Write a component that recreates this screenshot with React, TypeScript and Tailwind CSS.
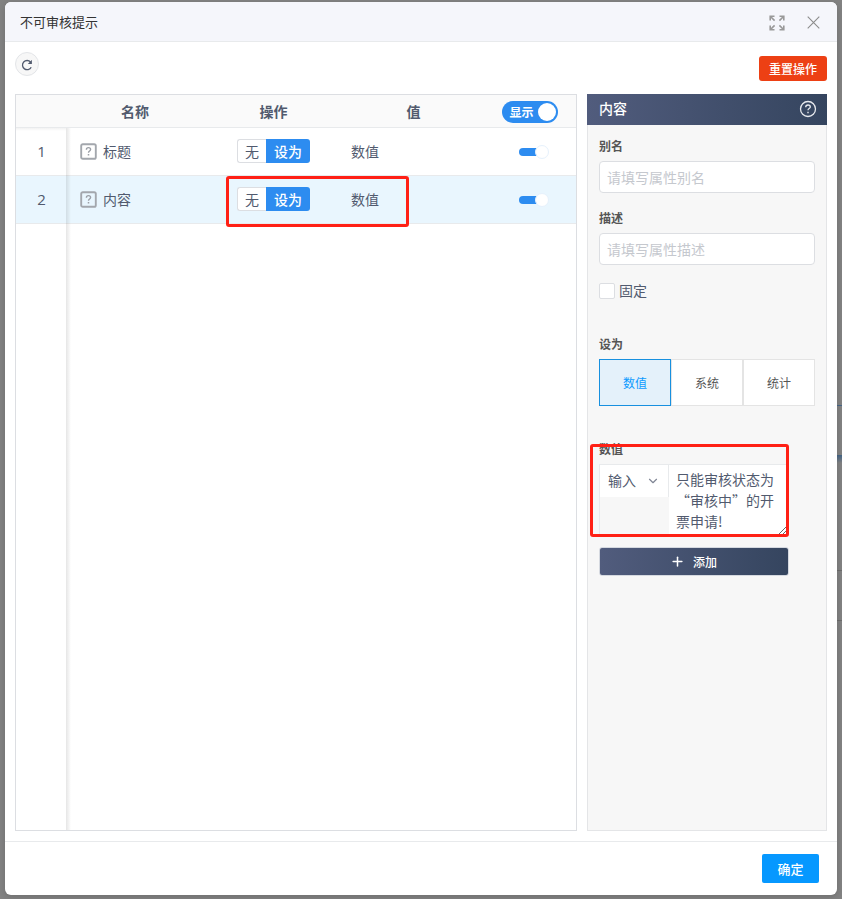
import React from 'react';
import { ChevronDown, Plus } from 'lucide-react';

const rows = [
  { id: 1, name: '标题', active: false },
  { id: 2, name: '内容', active: true },
];

const tabs = ['数值', '系统', '统计'];

const HelpSquare = () => (
  <svg width="17" height="17" viewBox="0 0 17 17" fill="none" className="shrink-0">
    <rect x="1.2" y="1.2" width="14.6" height="14.6" rx="1.6" stroke="#a3a7ad" strokeWidth="1.9" />
    <path d="M6.4 6.7c0-1.3.9-2.1 2.1-2.1s2.1.8 2.1 1.9c0 1.5-2.1 1.6-2.1 3.2" stroke="#9b9fa6" strokeWidth="1.4" />
    <path d="M8.5 11v1.6" stroke="#9b9fa6" strokeWidth="1.5" />
  </svg>
);

const HelpCircle = () => (
  <svg width="18" height="18" viewBox="0 0 18 18" fill="none" className="-mt-px">
    <circle cx="9" cy="9" r="7.5" stroke="#e8eaee" strokeWidth="1.3" />
    <path d="M6.7 7.3c0-1.4 1-2.3 2.3-2.3s2.3.8 2.3 2c0 1.6-2.3 1.6-2.3 3.3" stroke="#e8eaee" strokeWidth="1.3" />
    <path d="M9 11.7v1.5" stroke="#e8eaee" strokeWidth="1.4" />
  </svg>
);

const FullscreenIcon = () => (
  <svg width="16" height="16" viewBox="0 0 16 16" fill="none" stroke="#999" strokeWidth="1.6" className="mt-[2px]">
    <path d="M1.2 5.5V1.2h4.3M1.2 1.2l4.4 4.4" />
    <path d="M10.5 1.2h4.3v4.3M14.8 1.2l-4.4 4.4" />
    <path d="M1.2 10.5v4.3h4.3M1.2 14.8l4.4-4.4" />
    <path d="M14.8 10.5v4.3h-4.3M14.8 14.8l-4.4-4.4" />
  </svg>
);

const CloseIcon = () => (
  <svg width="13" height="13" viewBox="0 0 13 13" stroke="#8c8c8c" strokeWidth="1.1" className="mt-[2px]">
    <path d="M.7.7l11.6 11.6M12.3.7L.7 12.3" />
  </svg>
);

const ReloadIcon = () => (
  <svg width="12" height="12" viewBox="0 0 12 12" fill="none" stroke="#515a6e" strokeWidth="1.3" className="mt-px">
    <path d="M10.2 8.2A4.6 4.6 0 1 1 9.6 3.1" />
    <path d="M10.9.8v4.1H6.8z" fill="#515a6e" stroke="none" />
  </svg>
);

const SmallSwitch = () => (
  <div className="relative h-[14px] w-[30px]">
    <div className="absolute top-[3px] left-0 h-2 w-6 rounded-full bg-[#2d8cf0]" />
    <div className="absolute top-0 right-0 h-[14px] w-[14px] rounded-full border border-[#e6f1fc] bg-white" />
  </div>
);

const Table = () => (
  <div className="relative flex w-[562px] flex-col border border-[#dcdee2] bg-white">
    <div className="grid h-[33px] shrink-0 grid-cols-[51px_136px_141px_139px_93px] items-center border-b border-[#e8eaec] bg-[#fafafa] text-center text-sm font-bold text-[#515a6e]">
      <span />
      <span>名称</span>
      <span>操作</span>
      <span>值</span>
      <div className="flex justify-center pt-px">
        <div className="flex h-[22px] w-14 items-center justify-between rounded-full bg-[#2d8cf0] pr-[2px] pl-2 text-xs text-white">
          <span>显示</span>
          <span className="h-[18px] w-[18px] rounded-full bg-white" />
        </div>
      </div>
    </div>
    {rows.map(row => (
      <div
        key={row.id}
        className={`grid h-12 shrink-0 grid-cols-[51px_136px_141px_139px_93px] items-center border-b border-[#e8eaec] text-sm text-[#515a6e] ${row.active ? 'bg-[#e9f6fe]' : 'bg-white'}`}
      >
        <span className="text-center font-['Open_Sans',sans-serif] text-[15px]">{row.id}</span>
        <div className="flex items-center gap-[6px] pl-[13px]">
          <HelpSquare />
          <span className="-mt-[2px]">{row.name}</span>
        </div>
        <div className="flex pb-[2px] pl-[34px] leading-5">
          <span className="flex h-6 w-[29px] items-center justify-center rounded-l-[3px] border border-r-0 border-[#dcdee2] bg-white">无</span>
          <span className="flex h-6 w-11 items-center justify-center rounded-r-[3px] bg-[#2d8cf0] font-medium text-white">设为</span>
        </div>
        <span className="pb-[2px] pl-[7px]">数值</span>
        <div className="flex justify-center pl-[9px]">
          <SmallSwitch />
        </div>
      </div>
    ))}
    {/* fixed index column edge */}
    <div className="absolute top-[33px] bottom-0 left-[50px] w-[5px] bg-linear-to-r from-black/10 to-transparent" />
    <div className="absolute top-[33px] left-0 h-[3px] w-[50px] bg-linear-to-b from-black/5 to-transparent" />
    <div className="absolute top-[81px] left-[210px] h-[51px] w-[183px] rounded-[3px] border-[3px] border-[#ff2015]" />
  </div>
);

const Label = ({ children }: { children: React.ReactNode }) => (
  <div className="h-[18px] text-xs leading-[18px] font-bold text-[#555]">{children}</div>
);

const Panel = () => (
  <div className="flex w-60 flex-col bg-[#f7f7f7]">
    <div className="flex h-[31px] shrink-0 items-center justify-between bg-linear-to-r from-[#515c7d] to-[#35455f] pr-[10px] pl-3 text-sm font-medium text-white">
      <span className="-mt-[3px]">内容</span>
      <HelpCircle />
    </div>
    <div className="flex-1 border border-t-0 border-[#e4e5e7] px-[11px] pt-3">
      <Label>别名</Label>
      <div className="mt-[6px] flex h-8 items-center rounded border border-[#dcdee2] bg-white px-[7px] text-sm text-[#c5c8ce]">请填写属性别名</div>
      <div className="mt-4">
        <Label>描述</Label>
      </div>
      <div className="mt-[6px] flex h-8 items-center rounded border border-[#dcdee2] bg-white px-[7px] text-sm text-[#c5c8ce]">请填写属性描述</div>
      <div className="mt-4 flex h-5 items-center gap-1 text-sm text-[#515a6e]">
        <span className="h-4 w-4 rounded-[2px] border border-[#dcdee2] bg-white" />
        <span className="-mt-[2px]">固定</span>
      </div>
      <div className="mt-[34px]">
        <Label>设为</Label>
      </div>
      <div className="mt-[6px] grid h-[47px] grid-cols-3 text-xs text-[#555]">
        {tabs.map((tab, i) => (
          <span
            key={tab}
            className={`flex items-center justify-center border ${i === 0 ? 'border-[#1890df] bg-[#e4f1fa] text-[#0d9bff]' : 'border-[#e4e4e4] bg-white'}`}
          >
            {tab}
          </span>
        ))}
      </div>
      <div className="relative mt-[34px]">
        <Label>数值</Label>
        <div className="mt-[6px] flex h-[71px] w-[189px] border-t border-l border-[#e8eaec]">
          <div className="flex h-8 w-[69px] items-center justify-between border-r border-[#e8eaec] bg-white pr-2 pb-[3px] pl-2 text-sm text-[#515a6e]">
            <span>输入</span>
            <ChevronDown size={14} strokeWidth={2} className="mt-[2px] text-[#808695]" />
          </div>
          <div className="relative flex-1 bg-white pt-1 pl-[7px] text-sm leading-[21px] whitespace-nowrap text-[#515a6e]">
            <div>只能审核状态为</div>
            <div>“审核中”的开</div>
            <div>票申请!</div>
            <svg width="8" height="8" viewBox="0 0 8 8" stroke="#666" className="absolute right-[2px] bottom-0">
              <path d="M0 8L8 0M4 8l4-4" />
            </svg>
          </div>
        </div>
        <div className="absolute top-1 -left-[9px] h-[93px] w-[199px] rounded-[3px] border-[3px] border-[#ff2015]" />
      </div>
      <button className="mt-3 flex h-[29px] w-[190px] items-center justify-center gap-2 rounded-[3px] border border-[#d5d9e0] bg-linear-to-r from-[#515c7d] to-[#35455f] pr-px text-xs font-medium text-white">
        <Plus size={15} strokeWidth={2.4} />
        添加
      </button>
    </div>
  </div>
);

const App: React.FC = () => {
  return (
    <div className="relative h-[899px] w-[842px] overflow-hidden bg-[#828282] pt-[2px] pl-[5px] font-['Noto_Sans_CJK_SC',sans-serif]">
      {/* dimmed page showing past the right edge */}
      <div className="absolute top-[405px] right-0 h-px w-[5px] bg-[#476788]" />
      <div className="absolute top-[455px] right-0 h-2 w-[5px] bg-linear-to-b from-[#426384] to-[#828282]" />
      <div className="absolute top-[570px] right-0 h-px w-[5px] bg-[#6d6d6d]" />
      <div className="absolute top-[620px] right-0 h-px w-[5px] bg-[#6d6d6d]" />

      <div className="relative flex h-[893px] w-[832px] flex-col overflow-hidden rounded-md bg-white shadow-[0_2px_6px_rgba(0,0,0,0.15)]">
        <header className="flex h-10 shrink-0 items-center justify-between border-b border-[#e8eaec] bg-[#f5f6fb] pr-[17px] pl-[15px] text-[13px] text-[#333]">
          <span>不可审核提示</span>
          <div className="flex items-center gap-[22px]">
            <FullscreenIcon />
            <CloseIcon />
          </div>
        </header>

        <div className="flex h-[52px] shrink-0 items-start justify-between pr-[10px] pl-[10px]">
          <button className="mt-[10px] flex h-6 w-6 items-center justify-center rounded-full border border-[#e3e5e8] bg-[#f7f7f7]">
            <ReloadIcon />
          </button>
          <button className="mt-[14px] h-[25px] w-[68px] rounded-[3px] bg-[#ed4014] text-xs font-medium text-white">重置操作</button>
        </div>

        <div className="flex h-[737px] shrink-0 gap-[10px] px-[10px]">
          <Table />
          <Panel />
        </div>

        <footer className="mt-[10px] flex flex-1 justify-end border-t border-[#e8eaec] pt-3 pr-[18px]">
          <button className="h-[29px] w-[57px] rounded-[2px] bg-[#0698ff] text-[13px] font-medium text-white">确定</button>
        </footer>
      </div>
    </div>
  );
};

export default App;
